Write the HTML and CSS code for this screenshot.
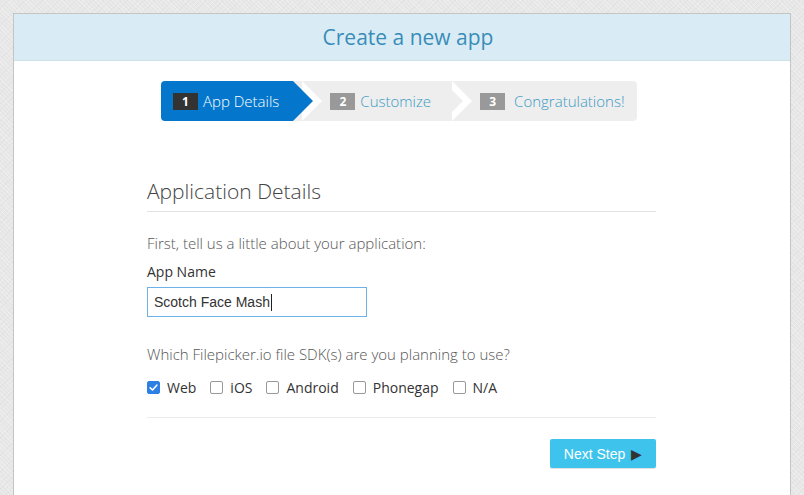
FILE: index.html
```html
<!DOCTYPE html>
<html>
<head>
<meta charset="utf-8">
<title>Create a new app</title>
<link rel="stylesheet" href="styles.css">
</head>
<body>
<div class="card">
  <div class="card-header">Create a new app</div>
  <div class="card-body">
    <ol class="steps">
      <li class="step active"><span class="num">1</span><span class="label">App Details</span></li>
      <li class="step"><span class="num">2</span><span class="label">Customize</span></li>
      <li class="step last"><span class="num">3</span><span class="label">Congratulations!</span></li>
    </ol>
    <div class="form">
      <h2 class="section-title">Application Details</h2>
      <p class="intro">First, tell us a little about your application:</p>
      <label class="field-label">App Name</label>
      <div class="input"><span class="input-text">Scotch Face Mash</span><span class="caret"></span></div>
      <p class="question">Which Filepicker.io file SDK(s) are you planning to use?</p>
      <div class="checks">
        <span class="check"><span class="box checked"><svg viewBox="0 0 13 13" width="13" height="13"><path d="M3.2 6.8 L5.5 9 L9.8 4.2" fill="none" stroke="#fff" stroke-width="1.6" stroke-linecap="round" stroke-linejoin="round"/></svg></span>Web</span>
        <span class="check"><span class="box"></span>iOS</span>
        <span class="check"><span class="box"></span>Android</span>
        <span class="check"><span class="box"></span>Phonegap</span>
        <span class="check"><span class="box"></span>N/A</span>
      </div>
      <div class="actions">
        <button class="next">Next Step <span class="tri">&#9654;</span></button>
      </div>
    </div>
  </div>
</div>
</body>
</html>
```

FILE: styles.css
```css
html, body {
  margin: 0;
  padding: 0;
  height: 100%;
  overflow: hidden;
}
body {
  background-color: #e7e7e7;
  background-image:
    repeating-linear-gradient(45deg, rgba(255,255,255,0.25) 0 1px, transparent 1px 3px),
    repeating-linear-gradient(-45deg, rgba(0,0,0,0.025) 0 1px, transparent 1px 4px);
  font-family: "Open Sans", "DejaVu Sans", sans-serif;
  color: #333;
}
.card {
  margin: 13px 13px 0 13px;
  width: 776px;
  background: #fff;
  border: 1px solid #c4c4c4;
  border-bottom: none;
  min-height: 520px;
}
.card-header {
  height: 46px;
  background: #d9ecf6;
  border-bottom: 1px solid #cfdfe8;
  color: #3a8cb8;
  font-size: 21px;
  line-height: 47px;
  text-align: center;
  padding-left: 12px;
}
.card-body {
  padding-top: 20px;
}
.steps {
  list-style: none;
  margin: 0 0 0 147px;
  padding: 0;
  display: flex;
  height: 40px;
}
.step {
  position: relative;
  display: flex;
  align-items: center;
  height: 40px;
  background: #eeeeee;
  padding: 0 12px 0 37px;
  font-size: 15px;
  font-weight: 300;
  color: #3a9bc4;
}
.step::before {
  content: "";
  position: absolute;
  top: 0;
  right: -29px;
  border-left: 20px solid #fff;
  border-top: 20px solid transparent;
  border-bottom: 20px solid transparent;
  z-index: 1;
}
.step::after {
  content: "";
  position: absolute;
  top: 0;
  right: -20px;
  border-left: 20px solid #eeeeee;
  border-top: 20px solid transparent;
  border-bottom: 20px solid transparent;
  z-index: 2;
}
.step.active {
  background: #0477cd;
  color: #fff;
  padding-left: 12px;
  padding-right: 14px;
  border-radius: 4px 0 0 4px;
}
.step.active::after {
  border-left-color: #0477cd;
}
.step.last {
  border-radius: 0 4px 4px 0;
  padding-right: 12px;
}
.step.last::before, .step.last::after {
  display: none;
}
.num {
  display: inline-block;
  width: 25px;
  height: 17px;
  line-height: 17px;
  text-align: center;
  background: #999;
  color: #fff;
  font-size: 12px;
  font-weight: 700;
  margin-right: 5px;
}
.active .num {
  background: #333;
}
.last .num {
  margin-right: 9px;
}
.form {
  width: 509px;
  margin: 0 0 0 133px;
  padding-top: 55px;
}
.section-title {
  margin: 0;
  font-size: 21px;
  font-weight: 300;
  color: #444;
  line-height: 30px;
  padding-bottom: 5px;
  border-bottom: 1px solid #e3e3e3;
}
.intro {
  margin: 21px 0 0 0;
  font-size: 15px;
  font-weight: 300;
  color: #555;
  line-height: 20px;
}
.field-label {
  display: block;
  margin-top: 9px;
  font-size: 14px;
  line-height: 20px;
  color: #333;
}
.input {
  margin-top: 5px;
  width: 206px;
  height: 28px;
  border: 1px solid #6cb2e6;
  padding: 0 6px;
  display: flex;
  align-items: center;
  font-family: "Liberation Sans", Arial, sans-serif;
  font-size: 14px;
  color: #333;
}
.caret {
  display: inline-block;
  width: 1px;
  height: 17px;
  background: #222;
  margin-left: 1px;
}
.question {
  margin: 27px 0 0 0;
  font-size: 15px;
  font-weight: 300;
  color: #555;
  line-height: 20px;
}
.checks {
  display: flex;
  margin-top: 13px;
  height: 20px;
  align-items: center;
  padding-bottom: 20px;
  border-bottom: 1px solid #ebebeb;
}
.check {
  display: inline-flex;
  align-items: center;
  font-size: 14px;
  color: #333;
  margin-right: 14px;
}
.box {
  display: inline-block;
  box-sizing: border-box;
  width: 13px;
  height: 13px;
  border: 1px solid #999;
  border-radius: 2px;
  background: #fff;
  margin-right: 7px;
}
.box.checked {
  background: #2d7fe3;
  border-color: #2d7fe3;
  position: relative;
}
.box.checked svg {
  display: block;
  margin: -1px;
}
.actions {
  display: flex;
  justify-content: flex-end;
  padding-top: 21px;
}
.next {
  width: 106px;
  height: 29px;
  border: none;
  border-radius: 2px;
  background: #3ec4ec;
  box-shadow: 0 1px 0 #e2e2e2;
  color: #fff;
  font-family: "Liberation Sans", Arial, sans-serif;
  font-size: 14px;
  padding: 0 0 0 0;
  text-align: center;
}
.tri {
  color: #333;
  font-size: 14px;
  margin-left: 2px;
}
```
